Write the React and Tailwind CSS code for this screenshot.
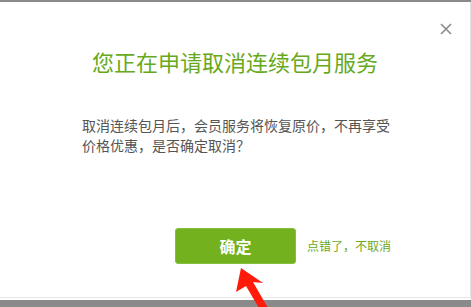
import {useState} from "react";

function CloseIcon(){
    return (
        <svg width="12" height="12" viewBox="0 0 12 12" fill="none" stroke="#8a8a8a" strokeWidth="1.6">
            <path d="M1 1 L11 11 M11 1 L1 11" />
        </svg>
    )
}

function Arrow(){
    // red pointer drawn over the confirm button, offset (225,265) in the page
    return (
        <svg className="absolute left-[225px] top-[265px]" width="50" height="42" viewBox="0 0 50 42">
            <polygon fill="#ff1a0a" points="16,3 38,18 28,17 43,43 34,43 21,21 11,27" />
        </svg>
    )
}

function App(){
    const [open, setOpen] = useState(true)
    const font = "font-['Microsoft_YaHei','Noto_Sans_CJK_SC',sans-serif]"
    return (
        <div className={`relative w-[471px] h-[307px] overflow-hidden flex flex-col bg-white ${font}`}>
            <div className="h-[2px] bg-[#8a8a8a]"></div>
            <div className="h-[295px] bg-white border-r border-[#e2e2e2]">
                {open && (
                    <>
                        <h2 className="mt-[44px] text-center text-[22px] leading-[30px] font-normal text-[#67a91c]">
                            您正在申请取消连续包月服务
                        </h2>
                        <p className="ml-[82px] mt-[39px] w-[312px] text-[14px] leading-[20px] text-[#555]">
                            取消连续包月后，会员服务将恢复原价，不再享受价格优惠，是否确定取消？
                        </p>
                        <div className="flex items-center ml-[175px] mt-[73px]">
                            <button className="w-[121px] h-[36px] rounded-[3px] bg-[#73b21e] border border-[#86bf3f] text-white text-[16px] font-bold">
                                确定
                            </button>
                            <button onClick={() => setOpen(false)} className="ml-[11px] text-[12px] text-[#6aa823]">
                                点错了，不取消
                            </button>
                        </div>
                    </>
                )}
            </div>
            <div className="h-[1px] bg-[#e6e6e6]"></div>
            <div className="h-[2px] bg-white"></div>
            <div className="flex-1 bg-[#8a8a8a]"></div>
            <button className="absolute left-[440px] top-[23px]">
                <CloseIcon />
            </button>
            <Arrow />
        </div>
    )
}
export default App
